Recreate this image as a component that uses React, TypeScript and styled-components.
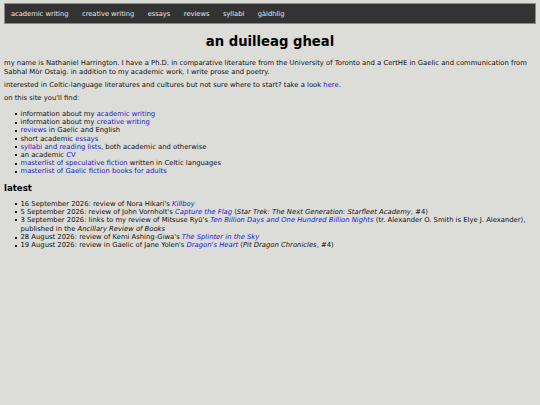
import styled, { createGlobalStyle } from 'styled-components'

const GlobalStyle = createGlobalStyle`
  html, body {
    margin: 0;
    padding: 0;
    background: #dcdcd8;
  }
  body {
    font-family: "DejaVu Sans", Verdana, sans-serif;
    font-size: 6.82px;
    color: #111;
  }
`

const Page = styled.div`
  padding: 3px 4px;
`

const Nav = styled.nav`
  display: flex;
  align-items: center;
  gap: 13.5px;
  height: 19px;
  padding: 0 6px;
  background: #333333;
  border: 1px solid #8a8a88;
`

const NavLink = styled.a`
  color: #e8e8e8;
  text-decoration: none;
  font-size: 6.7px;
`

const Title = styled.h1`
  margin: 10px 0 10px;
  line-height: 15px;
  text-align: center;
  font-size: 13.2px;
  font-weight: bold;
  color: #000;
`

const Para = styled.p`
  margin: 0 0 4px;
  line-height: 9px;
`

const List = styled.ul`
  margin: 7px 0 8px;
  padding: 0;
  list-style: none;
  line-height: 8.2px;
`

const Item = styled.li`
  position: relative;
  padding-left: 16.5px;
  &::before {
    content: '';
    position: absolute;
    left: 11px;
    top: 3.4px;
    width: 2px;
    height: 2px;
    background: #222;
  }
`

const WrapItem = styled(Item)`
  line-height: 8.6px;
`

const Heading = styled.h2`
  margin: 0;
  line-height: 9px;
  font-size: 8.6px;
  font-weight: bold;
  color: #000;
`

const A = styled.a`
  color: #1a1acc;
  text-decoration: none;
`

const Cite = styled.i`
  font-style: italic;
`

const navItems = ['academic writing', 'creative writing', 'essays', 'reviews', 'syllabi', 'gàidhlig']

export default function App() {
  return (
    <>
      <GlobalStyle />
      <Page>
        <Nav>
          {navItems.map((n) => (
            <NavLink key={n} href="#">{n}</NavLink>
          ))}
        </Nav>
        <Title>an duilleag gheal</Title>
        <Para>
          my name is Nathaniel Harrington. I have a Ph.D. in comparative literature from the University of Toronto and a CertHE in Gaelic and communication from Sabhal Mòr Ostaig. in addition to my academic work, I write prose and poetry.
        </Para>
        <Para>
          interested in Celtic-language literatures and cultures but not sure where to start? take a look <A href="#">here</A>.
        </Para>
        <Para>on this site you'll find:</Para>
        <List>
          <Item>information about my <A href="#">academic writing</A></Item>
          <Item>information about my <A href="#">creative writing</A></Item>
          <Item><A href="#">reviews</A> in Gaelic and English</Item>
          <Item>short academic <A href="#">essays</A></Item>
          <Item><A href="#">syllabi and reading lists</A>, both academic and otherwise</Item>
          <Item>an academic <A href="#">CV</A></Item>
          <Item><A href="#">masterlist of speculative fiction</A> written in Celtic languages</Item>
          <Item><A href="#">masterlist of Gaelic fiction books for adults</A></Item>
        </List>
        <Heading>latest</Heading>
        <List>
          <Item>16 September 2026: review of Nora Hikari's <A href="#"><Cite>Killboy</Cite></A></Item>
          <Item>5 September 2026: review of John Vornholt's <A href="#"><Cite>Capture the Flag</Cite></A> (<Cite>Star Trek: The Next Generation: Starfleet Academy</Cite>, #4)</Item>
          <WrapItem>3 September 2026: links to my review of Mitsuse Ryū's <A href="#"><Cite>Ten Billion Days and One Hundred Billion Nights</Cite></A> (tr. Alexander O. Smith is Elye J. Alexander), published in the <Cite>Ancillary Review of Books</Cite></WrapItem>
          <Item>28 August 2026: review of Kemi Ashing-Giwa's <A href="#"><Cite>The Splinter in the Sky</Cite></A></Item>
          <Item>19 August 2026: review in Gaelic of Jane Yolen's <A href="#"><Cite>Dragon's Heart</Cite></A> (<Cite>Pit Dragon Chronicles</Cite>, #4)</Item>
        </List>
      </Page>
    </>
  )
}
